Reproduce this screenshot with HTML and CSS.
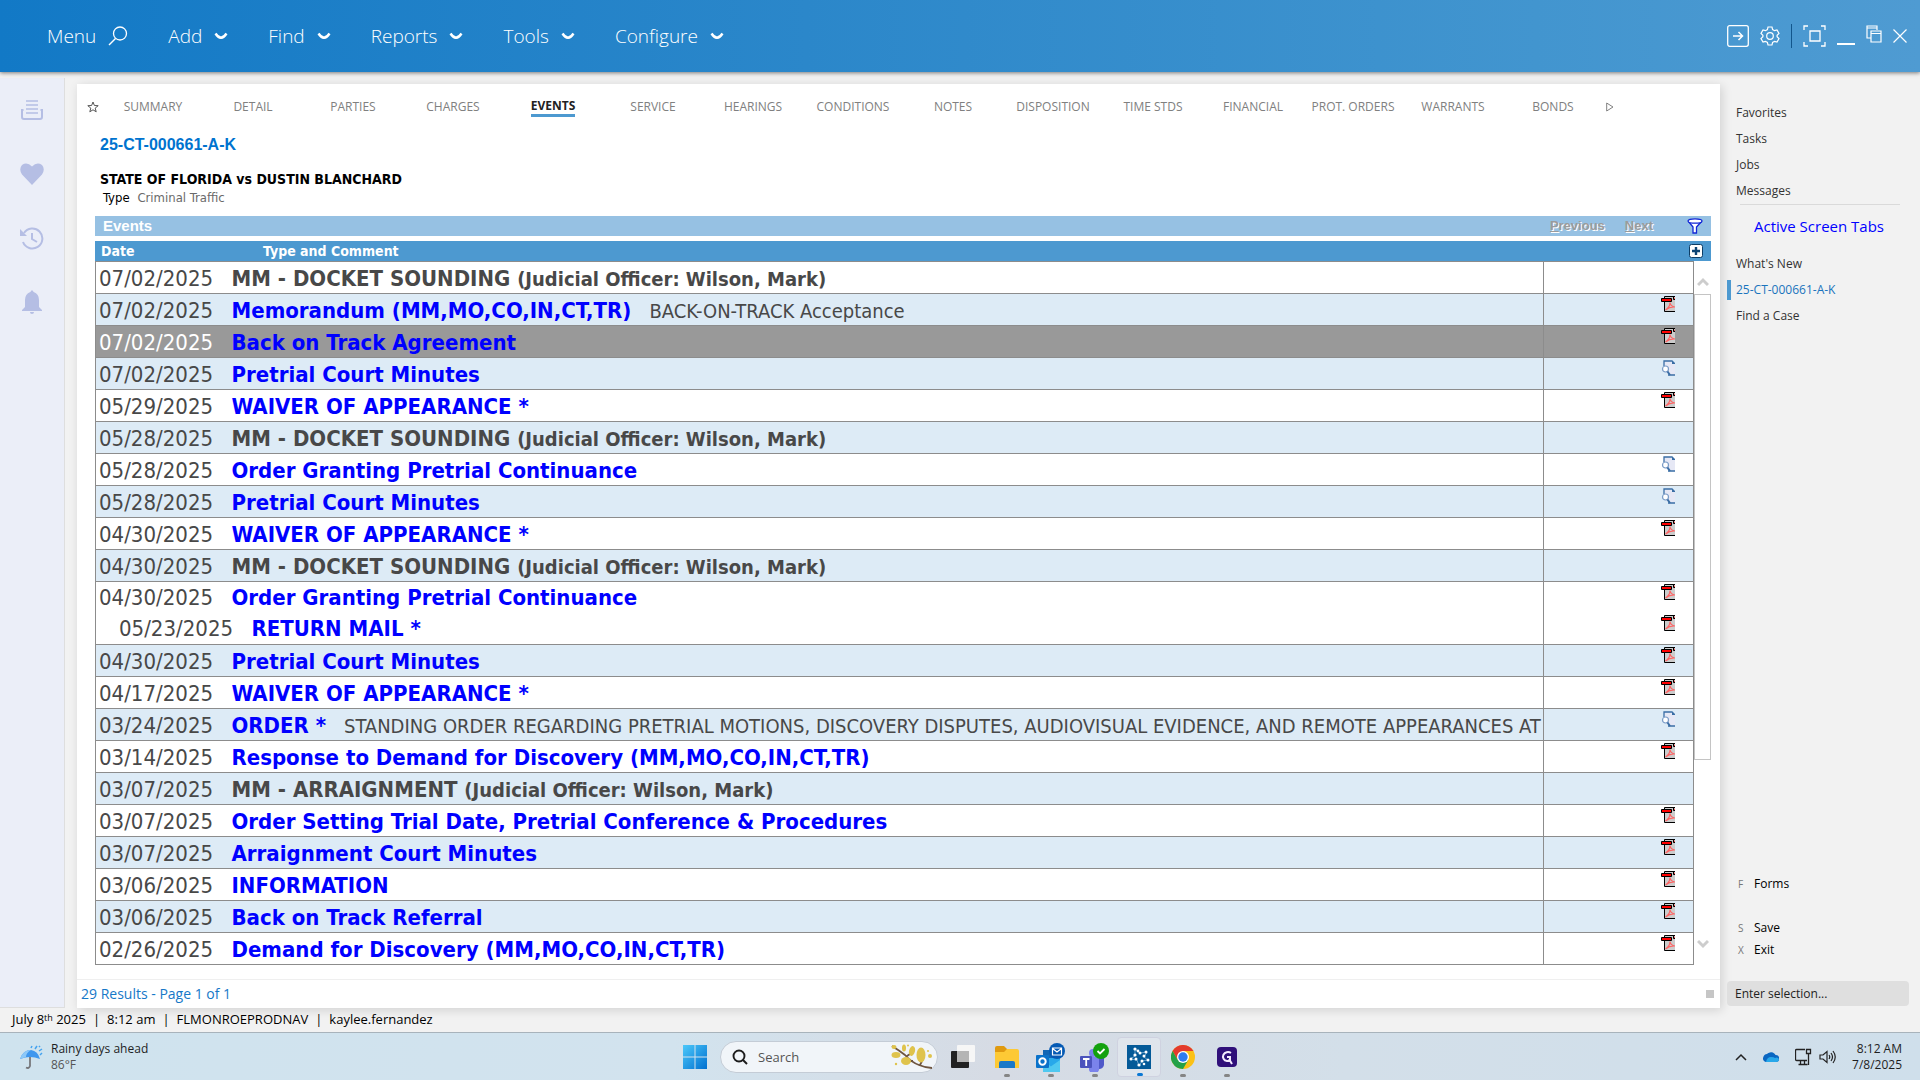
FILE: index.html
```html
<!DOCTYPE html>
<html lang="en">
<head>
<meta charset="utf-8">
<title>25-CT-000661-A-K - Events</title>
<link rel="stylesheet" href="styles.css">
</head>
<body>
<svg class="defs" aria-hidden="true">
  <symbol id="chev" viewBox="0 0 14 10"><path d="M1.500 2.500Q4 6.500 7 6.800Q10 6.500 12.500 2.500" fill="none" stroke="currentColor" stroke-width="2.400"/></symbol>
  <symbol id="pdf" viewBox="0 0 14 16"><path d="M3.500 6V15.500H14V1H3.500z" fill="#ccc"/><path d="M3.500 6V15.500H14M3.500 2V.5H14" fill="none" stroke="#000"/><path d="M12.500 0v3.500H14" fill="#f00" stroke="#000"/><path d="M.5 2.500h10v3H.5z" fill="#f00" stroke="#000"/><path d="M4.500 14Q9 11 9 6.500Q9.500 10.500 14 11Q9 10.500 4.500 14" fill="none" stroke="#ff6464" stroke-width="1.200"/></symbol>
  <symbol id="doc" viewBox="0 0 14 16"><path d="M3 1h8l3 3v11H8l-5-4z" fill="#e6e8f5"/><path d="M3 6V1h8M7 15h7" fill="none" stroke="#3a6ea5" stroke-width="1.300"/><path d="M11 0v4h3V3z" fill="#3a6ea5"/><circle cx="4.500" cy="9" r="3" fill="#fff" stroke="#7b9cc7" stroke-width="1.200"/><path d="M6.500 11.500L9 15" stroke="#3a6ea5" stroke-width="2"/></symbol>
</svg>

<header class="topbar">
  <nav class="menu">
    <button>Menu <svg width="20" height="20" viewBox="0 0 20 20"><circle cx="12" cy="7.500" r="6.500" fill="none" stroke="currentColor" stroke-width="1.300"/><path d="M7.500 12.500L1 19" stroke="currentColor" stroke-width="1.500"/></svg></button>
    <button>Add <svg width="14" height="10"><use href="#chev"/></svg></button>
    <button>Find <svg width="14" height="10"><use href="#chev"/></svg></button>
    <button>Reports <svg width="14" height="10"><use href="#chev"/></svg></button>
    <button>Tools <svg width="14" height="10"><use href="#chev"/></svg></button>
    <button>Configure <svg width="14" height="10"><use href="#chev"/></svg></button>
  </nav>
  <div class="window-tools">
    <button aria-label="Go"><svg width="22" height="22" viewBox="0 0 22 22" fill="none" stroke="currentColor"><rect x=".7" y=".7" width="20.600" height="20.600" rx="2" stroke-width="1.300"/><path d="M6 11h9M11.500 7l4 4-4 4" stroke-width="1.500"/></svg></button>
    <button aria-label="Settings"><svg width="20" height="20" viewBox="0 0 20 20" fill="none" stroke="currentColor" stroke-width="1.200"><path d="M8 1h4l.6 2.600 1.900 1.100L17 4l2 3.400-1.900 1.800v1.600L19 12.600 17 16l-2.500-.7-1.900 1.100L12 19H8l-.6-2.600-1.900-1.100L3 16l-2-3.400 1.900-1.800V9.200L1 7.400 3 4l2.500.7 1.900-1.100z"/><circle cx="10" cy="10" r="3.300"/></svg></button>
    <span class="divider"></span>
    <button aria-label="Full screen"><svg width="23" height="22" viewBox="0 0 23 22" fill="none" stroke="currentColor" stroke-width="1.300"><path d="M1 5V1h4M18 1h4v4M22 17v4h-4M5 21H1v-4M7 6h10v10H7z"/></svg></button>
    <button aria-label="Minimize"><svg width="18" height="22"><path d="M0 19h18" stroke="currentColor" stroke-width="2"/></svg></button>
    <button aria-label="Restore"><svg width="16" height="22" viewBox="0 0 16 22" fill="none" stroke="currentColor" stroke-width="1.200"><path d="M5 13H1V1h10v4M1 3h10M5 6h10v11H5zM5 8.500h10"/></svg></button>
    <button aria-label="Close"><svg width="14" height="14"><path d="M.5.5l13 13M13.500.5l-13 13" stroke="currentColor" stroke-width="1.200"/></svg></button>
  </div>
</header>

<div class="workspace">
  <nav class="rail">
    <button aria-label="Inbox"><svg width="24" height="24" viewBox="0 0 24 24" fill="none" stroke="currentColor" stroke-width="2"><path d="M6 3h12M6 7h12M6 11h12M6 15h12" stroke-width="1.700"/><path d="M3.500 12H2v7q0 2 2 2h16q2 0 2-2v-7h-1.500"/></svg></button>
    <button aria-label="Favorites"><svg width="24" height="24" viewBox="0 0 24 24"><path d="M12 23L2 12.500Q-1.500 7 2 3Q7-.5 12 4.500Q17-.5 22 3Q25.500 7 22 12.500z" fill="currentColor"/></svg></button>
    <button aria-label="History"><svg width="24" height="24" viewBox="0 0 24 24" fill="none" stroke="currentColor" stroke-width="2"><path d="M4 7a10 10 0 1 1-1 9"/><path d="M12 7v6l5 3"/><path d="M0 3v7h7z" fill="currentColor" stroke="none"/></svg></button>
    <button aria-label="Alerts"><svg width="24" height="24" viewBox="0 0 24 24" fill="currentColor"><path d="M12 0l1.700 2Q19 4 19 10v7l3 3v1H2v-1l3-3v-7Q5 4 10.300 2zM10 22h4q0 2-2 2t-2-2"/></svg></button>
  </nav>

  <main class="card">
    <nav class="tabs">
      <button class="star" aria-label="Favorite"><svg width="12" height="12" viewBox="0 0 12 12"><path d="M6 1l1.400 3.500 3.800.2-3 2.400 1 3.700L6 8.800l-3.200 2 1-3.700-3-2.400 3.800-.2z" fill="none" stroke="currentColor"/></svg></button>
      <a href="#">SUMMARY</a><a href="#">DETAIL</a><a href="#">PARTIES</a><a href="#">CHARGES</a><a href="#" class="on"><span>EVENTS</span></a><a href="#">SERVICE</a><a href="#">HEARINGS</a><a href="#">CONDITIONS</a><a href="#">NOTES</a><a href="#">DISPOSITION</a><a href="#">TIME STDS</a><a href="#">FINANCIAL</a><a href="#">PROT. ORDERS</a><a href="#">WARRANTS</a><a href="#">BONDS</a>
      <button class="more" aria-label="More tabs"><svg width="8" height="10"><path d="M.7 1v8L7 5z" fill="none" stroke="currentColor"/></svg></button>
    </nav>
    <section class="case">
      <h1>25-CT-000661-A-K</h1>
      <h2>STATE OF FLORIDA vs DUSTIN BLANCHARD</h2>
      <p>Type <span>Criminal Traffic</span></p>
    </section>
    <section class="events">
      <div class="bar">
        <h3>Events</h3>
        <button class="pager" disabled><u>P</u>revious</button>
        <button class="pager" disabled><u>N</u>ext</button>
        <button class="filter" aria-label="Filter"><svg width="16" height="16" viewBox="0 0 16 16"><path d="M1.500 3.500L6 9v6h3.500V9L14.500 3.500" fill="#fff" stroke="#1126d6" stroke-width="1.300"/><ellipse cx="8" cy="3" rx="7" ry="2.200" fill="#fff" stroke="#1126d6" stroke-width="1.300"/></svg></button>
      </div>
      <table class="head">
        <tr><th class="date" scope="col">Date</th><th class="type" scope="col">Type and Comment</th><th class="add"><button aria-label="Add event"><svg width="14" height="14"><rect x=".5" y=".5" width="13" height="13" rx="2" fill="#fff" stroke="#0d3d66"/><path d="M7 3v8M3 7h8" stroke="#0d4474" stroke-width="2.400"/></svg></button></th></tr>
      </table>
      <div class="grid">
        <table class="rows">
          <colgroup><col class="c-date"><col><col class="c-doc"></colgroup>
          <tbody>
          <tr><td>07/02/2025</td><td><b>MM - DOCKET SOUNDING <small>(Judicial Officer: Wilson, Mark)</small></b></td><td></td></tr>
          <tr><td>07/02/2025</td><td><a href="#">Memorandum (MM,MO,CO,IN,CT,TR)</a><span class="note">BACK-ON-TRACK Acceptance</span></td><td><svg class="ico"><use href="#pdf"/></svg></td></tr>
          <tr class="sel"><td>07/02/2025</td><td><a href="#">Back on Track Agreement</a></td><td><svg class="ico"><use href="#pdf"/></svg></td></tr>
          <tr><td>07/02/2025</td><td><a href="#">Pretrial Court Minutes</a></td><td><svg class="ico"><use href="#doc"/></svg></td></tr>
          <tr><td>05/29/2025</td><td><a href="#">WAIVER OF APPEARANCE *</a></td><td><svg class="ico"><use href="#pdf"/></svg></td></tr>
          <tr><td>05/28/2025</td><td><b>MM - DOCKET SOUNDING <small>(Judicial Officer: Wilson, Mark)</small></b></td><td></td></tr>
          <tr><td>05/28/2025</td><td><a href="#">Order Granting Pretrial Continuance</a></td><td><svg class="ico"><use href="#doc"/></svg></td></tr>
          <tr><td>05/28/2025</td><td><a href="#">Pretrial Court Minutes</a></td><td><svg class="ico"><use href="#doc"/></svg></td></tr>
          <tr><td>04/30/2025</td><td><a href="#">WAIVER OF APPEARANCE *</a></td><td><svg class="ico"><use href="#pdf"/></svg></td></tr>
          <tr><td>04/30/2025</td><td><b>MM - DOCKET SOUNDING <small>(Judicial Officer: Wilson, Mark)</small></b></td><td></td></tr>
          <tr class="parent"><td>04/30/2025</td><td><a href="#">Order Granting Pretrial Continuance</a></td><td><svg class="ico"><use href="#pdf"/></svg></td></tr>
          <tr class="child"><td>05/23/2025</td><td><a href="#">RETURN MAIL *</a></td><td><svg class="ico"><use href="#pdf"/></svg></td></tr>
          <tr class="alt"><td>04/30/2025</td><td><a href="#">Pretrial Court Minutes</a></td><td><svg class="ico"><use href="#pdf"/></svg></td></tr>
          <tr class="plain"><td>04/17/2025</td><td><a href="#">WAIVER OF APPEARANCE *</a></td><td><svg class="ico"><use href="#pdf"/></svg></td></tr>
          <tr class="alt"><td>03/24/2025</td><td><a href="#">ORDER *</a><span class="note">STANDING ORDER REGARDING PRETRIAL MOTIONS, DISCOVERY DISPUTES, AUDIOVISUAL EVIDENCE, AND REMOTE APPEARANCES AT</span></td><td><svg class="ico"><use href="#doc"/></svg></td></tr>
          <tr class="plain"><td>03/14/2025</td><td><a href="#">Response to Demand for Discovery (MM,MO,CO,IN,CT,TR)</a></td><td><svg class="ico"><use href="#pdf"/></svg></td></tr>
          <tr class="alt"><td>03/07/2025</td><td><b>MM - ARRAIGNMENT <small>(Judicial Officer: Wilson, Mark)</small></b></td><td></td></tr>
          <tr class="plain"><td>03/07/2025</td><td><a href="#">Order Setting Trial Date, Pretrial Conference &amp; Procedures</a></td><td><svg class="ico"><use href="#pdf"/></svg></td></tr>
          <tr class="alt"><td>03/07/2025</td><td><a href="#">Arraignment Court Minutes</a></td><td><svg class="ico"><use href="#pdf"/></svg></td></tr>
          <tr class="plain"><td>03/06/2025</td><td><a href="#">INFORMATION</a></td><td><svg class="ico"><use href="#pdf"/></svg></td></tr>
          <tr class="alt"><td>03/06/2025</td><td><a href="#">Back on Track Referral</a></td><td><svg class="ico"><use href="#pdf"/></svg></td></tr>
          <tr class="plain"><td>02/26/2025</td><td><a href="#">Demand for Discovery (MM,MO,CO,IN,CT,TR)</a></td><td><svg class="ico"><use href="#pdf"/></svg></td></tr>
          </tbody>
        </table>
        <div class="scroll">
          <svg width="12" height="10"><path d="M1 8l5-5 5 5" fill="none" stroke="#cdcdcd" stroke-width="3"/></svg>
          <div class="track"><div class="thumb"></div></div>
          <svg width="12" height="10"><path d="M1 2l5 5 5-5" fill="none" stroke="#cdcdcd" stroke-width="3"/></svg>
        </div>
      </div>
    </section>
    <footer class="results"><span>29 Results - Page 1 of 1</span><i></i></footer>
  </main>

  <aside class="side">
    <ul class="links"><li><a href="#">Favorites</a></li><li><a href="#">Tasks</a></li><li><a href="#">Jobs</a></li><li><a href="#">Messages</a></li></ul>
    <h4>Active Screen Tabs</h4>
    <ul class="links open"><li><a href="#">What's New</a></li><li class="now"><a href="#">25-CT-000661-A-K</a></li><li><a href="#">Find a Case</a></li></ul>
    <div class="keys">
      <button class="apart"><kbd>F</kbd>Forms</button>
      <button><kbd>S</kbd>Save</button>
      <button><kbd>X</kbd>Exit</button>
    </div>
    <input type="text" aria-label="Enter selection" placeholder="Enter selection...">
  </aside>
</div>

<div class="status"><span>July 8<sup>th</sup> 2025</span><span>|</span><span>8:12 am</span><span>|</span><span>FLMONROEPRODNAV</span><span>|</span><span>kaylee.fernandez</span></div>

<footer class="taskbar">
  <button class="weather">
    <svg width="24" height="24" viewBox="0 0 24 24"><path d="M0 14Q3 5 11 5Q18 6 20 14Q10 10 0 14z" fill="#3f97ee"/><path d="M0 14Q3 5 11 5Q6 8 6 12z" fill="#8cc8f8"/><path d="M10 12v9q-1 3-4 1.500" fill="none" stroke="#77787c" stroke-width="1.800"/><path d="M11 3l1-2M15 4l2-3M19 2l1-1M19 6l3-2M20 10l2-2" stroke="#45a3ef" stroke-width="1.500"/></svg>
    <span>Rainy days ahead<br><em>86°F</em></span>
  </button>
  <div class="apps">
    <button class="app" aria-label="Start"><svg width="24" height="24"><defs><linearGradient id="win" x2="1" y2="1"><stop stop-color="#4cc8fa"/><stop offset="1" stop-color="#0070d0"/></linearGradient></defs><path d="M0 0h11.500v11.500H0zM12.500 0H24v11.500H12.500zM0 12.500h11.500V24H0zM12.500 12.500H24V24H12.500z" fill="url(#win)"/></svg></button>
    <label class="search">
      <svg width="16" height="16" viewBox="0 0 16 16" fill="none" stroke="#1c1c1c" stroke-width="1.900"><circle cx="7" cy="7" r="5.500"/><path d="M11 11l4 4"/></svg>
      <input type="text" placeholder="Search" aria-label="Search">
      <svg width="42" height="26" viewBox="0 0 42 26"><path d="M1 2Q9 7 14 11Q20 18 28 21Q35 24 41 24M16 12l6-4M22 17l-7 0M29 21l2-4" fill="none" stroke="#6e5540" stroke-width="1.800"/><g fill="#dfc34c"><ellipse cx="21" cy="7" rx="3" ry="5" transform="rotate(15 21 7)"/><ellipse cx="30" cy="11" rx="4.500" ry="7.500"/><ellipse cx="15" cy="17" rx="5" ry="4"/><ellipse cx="5" cy="11" rx="4.500" ry="3"/><ellipse cx="13" cy="4" rx="2" ry="3.500"/><ellipse cx="3" cy="3" rx="2.500" ry="2"/><circle cx="39" cy="12" r="2"/><circle cx="5" cy="20" r="1.200"/><circle cx="37" cy="7" r="1"/><circle cx="17" cy="1.500" r="1"/></g></svg>
    </label>
    <button class="app" aria-label="Task view"><svg width="24" height="24"><rect y="6" width="18" height="17" rx="1" fill="#222"/><rect x="6" width="18" height="17" rx="1" fill="#f6f6f6"/><rect x="6" y="6" width="12" height="11" fill="#b5b5b5"/></svg></button>
    <button class="app run" aria-label="File Explorer"><svg width="24" height="24"><path d="M0 3q0-2 2-2h7l3 3v6H0z" fill="#e09a10"/><path d="M0 7h9l3-3h10q2 0 2 2v17H0z" fill="#fdc935"/><path d="M4 23v-5q0-2 2-2h12q2 0 2 2v5z" fill="#1978c8"/></svg></button>
    <button class="app run" aria-label="Outlook"><svg width="30" height="30" viewBox="0 0 30 30"><path d="M7 8h17v22H7z" fill="#28a8ea"/><path d="M7 8h17v8H7z" fill="#1066b5"/><path d="M7 18l8.500 7L7 30zM24 18v12H7z" fill="#50c8f0"/><rect y="13" width="13" height="13" rx="1" fill="#0a72ca"/><circle cx="6.500" cy="19.500" r="3.200" fill="none" stroke="#fff" stroke-width="2"/><circle cx="21" cy="9" r="8" fill="#0459b4"/><path d="M16.500 6h9v7h-9zM16.500 6.500l4.500 3.500 4.500-3.500" fill="none" stroke="#fff" stroke-width="1.200"/></svg></button>
    <button class="app run" aria-label="Teams"><svg width="30" height="30" viewBox="0 0 30 30"><circle cx="13" cy="11" r="4" fill="#7b83eb"/><path d="M9 15h10v8a5 6 0 0 1-10 5z" fill="#7b83eb"/><path d="M19 16h5v7q-1 4-5 4z" fill="#5059c9"/><rect y="14" width="12" height="12" rx="1" fill="#4b53bc"/><path d="M3 17h6.500M6.200 17v7" stroke="#fff" stroke-width="1.800"/><circle cx="21" cy="9" r="8" fill="#13a10e"/><path d="M17.500 9l2.500 2.500L24.500 7" fill="none" stroke="#fff" stroke-width="1.800"/></svg></button>
    <button class="app run active" aria-label="Navigator"><svg width="24" height="24"><path d="M0 0h24v24H0z" fill="#045a98"/><path d="M8 4l5 4 7-1-3 5 4 3-6 1-3 5-2-6-7-1 5-3z" fill="none" stroke="#7db3d8" stroke-width=".8"/><g fill="#fff"><circle cx="8" cy="4" r="1.600"/><circle cx="11" cy="6" r="1.400"/><circle cx="13" cy="8" r="1.500"/><circle cx="19" cy="7" r="1.500"/><circle cx="17" cy="11" r="1.500"/><circle cx="21" cy="15" r="1.500"/><circle cx="15" cy="16" r="1.500"/><circle cx="12" cy="20" r="1.600"/><circle cx="9" cy="14" r="1.500"/><circle cx="4" cy="14" r="1.500"/><circle cx="8" cy="10" r="1.600"/><circle cx="17" cy="19" r="1.300"/></g></svg></button>
    <button class="app run" aria-label="Chrome"><svg width="24" height="24" viewBox="-12 -12 24 24"><circle r="12" fill="#fbc116"/><path d="M-10.400-6A12 12 0 0 1 10.400-6H0L-5.200 3z" fill="#e33b2e"/><path d="M-10.400-6A12 12 0 0 0 0 12L5.200 3-5.200 3z" fill="#24a148"/><circle r="6" fill="#fff"/><circle r="4.700" fill="#2e7cf0"/></svg></button>
    <button class="app run" aria-label="Search tool"><svg width="20" height="20"><rect width="20" height="20" rx="4" fill="#30107a"/><path d="M14 6a5 4.500 0 1 0-4 8h3v-4h-3M12 12l3 5" fill="none" stroke="#f4ecff" stroke-width="2"/></svg></button>
  </div>
  <div class="tray">
    <button aria-label="Hidden icons"><svg width="12" height="8"><path d="M1 7l5-5 5 5" fill="none" stroke="#222" stroke-width="1.500"/></svg></button>
    <button aria-label="OneDrive"><svg width="16" height="11"><path d="M4 3a5 4.500 0 0 1 8.500 1A3.500 3.500 0 0 1 13 11H3.500A3.500 3.500 0 0 1 0 7q1-4 4-4z" fill="#0a67c2"/><path d="M3 11q1-5 5-5 3 0 4 1a3 3 0 0 1 4 1q0 3-3 3z" fill="#28a8ea"/></svg></button>
    <button aria-label="Network and volume"><svg width="17" height="18" viewBox="0 0 17 18" fill="none" stroke="#222" stroke-width="1.300"><path d="M10 1.500H1.500q-1 0-1 1v9q0 1 1 1H12M3.500 16.500h9M5.500 13v3M9.500 13v3M11.500 1.500h4v4h-4zM13.500 6v11"/></svg><svg width="17" height="16" viewBox="0 0 17 16" fill="none" stroke="#222" stroke-width="1.200"><path d="M1 6h3l4-3.500v11L4 10H1zM10 6q1.500 2 0 4M12 4q3 4 0 8M14 2q4.500 6 0 12"/></svg></button>
    <button class="clock">8:12 AM<br>7/8/2025</button>
  </div>
</footer>
</body>
</html>
```
FILE: styles.css
```css
* { box-sizing: border-box; }
body {
  margin: 0; min-height: 100vh; display: flex; flex-direction: column;
  background: #f2f2f2; color: #1e1e1e;
  font: 12px/16px "Open Sans", "Noto Sans", sans-serif;
}
button, input { font: inherit; color: inherit; border: 0; padding: 0; margin: 0; background: none; }
button { display: flex; align-items: center; }
a { color: inherit; text-decoration: none; }
h1, h2, h3, h4, p, ul { margin: 0; padding: 0; }
svg { display: block; flex: none; }
.defs { position: absolute; width: 0; height: 0; }

.topbar {
  height: 72px; flex: none; display: flex; align-items: center; justify-content: space-between;
  padding: 0 13px 0 47px; color: #fff;
  background: linear-gradient(90deg, #1279c6, #2b87ca 42%, #4295cf 80%, #4f9bd2);
  box-shadow: 0 1px 4px rgba(0, 0, 0, .5); z-index: 1;
}
.menu { display: flex; gap: 40px; }
.menu button { gap: 12px; font-size: 19px; line-height: 28px; font-weight: 300; }
.window-tools { display: flex; align-items: center; gap: 11px; }
.divider { width: 1px; height: 24px; background: #12568c; }

.workspace { flex: 1; display: flex; }
.rail {
  width: 65px; flex: none; margin-top: 6px; padding-top: 20px;
  display: flex; flex-direction: column; align-items: center; gap: 40px;
  background: #ebeef8; border: solid #dedede; border-width: 0 1px 1px 0; color: #b5bee4;
}
.card {
  flex: 1; min-width: 0; margin: 12px 0 0 12px; display: flex; flex-direction: column;
  background: #fff; box-shadow: 2px 2px 10px rgba(0, 0, 0, .14);
}
.tabs { display: flex; align-items: center; height: 46px; color: #808080; padding-left: 10px; }
.tabs a { flex: 0 1 100px; text-align: center; white-space: nowrap; font-size: 12px; }
.tabs .star { width: 16px; flex: none; color: #555; }
.tabs .more { padding-left: 3px; }
.on span { display: inline-block; font-weight: 700; color: #222; border-bottom: 3px solid #4d99d0; line-height: 17px; }
.case { padding: 6px 0 0 23px; height: 86px; font-family: "DejaVu Sans Condensed", "DejaVu Sans", sans-serif; }
.case h1 { font: bold 16px/18px "Liberation Sans", sans-serif; color: #0073cf; }
.case h2 { font-size: 14px; line-height: 18px; margin-top: 16px; color: #000; }
.case p { padding-left: 3px; line-height: 20px; font-size: 13px; color: #000; }
.case p span { color: #6a6a6a; margin-left: 4px; }

.events { padding: 0 9px 14px 18px; }
.bar { height: 20px; display: flex; align-items: center; padding: 0 8px; background: #96c1e3; font-family: "Liberation Sans", sans-serif; }
.bar h3 { flex: 1; font-size: 15px; color: #fff; }
.pager { font-size: 13px; font-weight: 700; color: #9b9b9b; text-shadow: 1px 1px #fff; margin-right: 20px; }
.filter { margin-left: 14px; }
.head { width: 100%; height: 20px; margin-top: 5px; border-spacing: 0; background: #4d99d0; color: #fff; font: bold 14px/20px "DejaVu Sans Condensed", "DejaVu Sans", sans-serif; }
.head th { padding: 0; text-align: left; }
.head .date { width: 168px; padding-left: 6px; }
.head .add { width: 22px; }

.grid { display: flex; }
.rows {
  flex: 1; min-width: 0; width: 100%; table-layout: fixed; border-collapse: collapse; border: 1px solid #8c8c8c;
  font: 22px/26px "DejaVu Sans Condensed", "DejaVu Sans", sans-serif; color: #484848;
}
.c-date { width: 133px; }
.c-doc { width: 150px; }
.rows tr { height: 32px; border-bottom: 1px solid #8c8c8c; }
.rows tr:nth-child(even) { background: #ddebf6; }
.rows tr.sel { background: #999; }
.rows tr.sel td:first-child { color: #fff; }
.rows tr.alt { background: #ddebf6; }
.rows tr.plain, .rows tr.child { background: #fff; }
.rows tr.parent { border-bottom: 0; height: 31px; }
.rows td { padding: 2px 0 0 3px; white-space: nowrap; overflow: hidden; }
.rows td:last-child { border-left: 1px solid #8c8c8c; vertical-align: top; padding: 2px 18px 0 0; }
.rows .child td:not(:last-child) { padding-left: 23px; }
.rows td:first-child { overflow: visible; }
.rows a { color: #00f; font-weight: 700; }
.rows small { font-size: 20px; }
.note { font-size: 20px; margin-left: 18px; }
.ico { width: 14px; height: 16px; margin-left: auto; }
.scroll { width: 17px; flex: none; display: flex; flex-direction: column; align-items: center; padding: 16px 0; }
.track { flex: 1; align-self: stretch; margin: 7px 0; }
.thumb { height: 73%; border: 1px solid #c4c4c4; background: #fff; }
.results {
  margin-top: auto; height: 29px; display: flex; align-items: center; justify-content: space-between;
  padding: 0 6px 0 4px; border-top: 1px solid #efefef; color: #1678c8; font-size: 14px;
}
.results i { width: 8px; height: 8px; background: #c6c6c6; }

.side { width: 200px; flex: none; padding: 28px 11px 2px 7px; display: flex; flex-direction: column; color: #333; }
.links { list-style: none; }
.links li { padding-left: 9px; line-height: 26px; }
.side h4 { margin: 0 9px 0 13px; padding: 8px 0 0 14px; border-top: 1px solid #dadada; font-size: 15px; line-height: 26px; font-weight: 400; color: #00f; white-space: nowrap; }
.links.open { margin-top: 12px; }
.links .now { color: #1a74bd; line-height: 20px; margin: 3px 0; padding-left: 5px; border-left: 4px solid #4d99d0; }
.keys { margin-top: auto; padding-bottom: 20px; color: #000; }
.keys button { height: 22px; padding-left: 11px; }
.keys .apart { margin-bottom: 22px; }
.keys kbd { width: 16px; font: 10px "Open Sans", sans-serif; color: #777; text-align: left; }
.side input { height: 25px; padding: 0 8px; border-radius: 4px; background: #dfdfdf; font-size: 12px; }
.side input::placeholder { color: #222; opacity: 1; }

.status { height: 24px; flex: none; display: flex; align-items: center; gap: 7px; padding: 0 12px 2px; font-size: 13px; color: #000; }
.status sup { font-size: 9px; line-height: 0; vertical-align: 3px; }

.taskbar {
  height: 48px; flex: none; display: grid; grid-template-columns: 1fr auto 1fr; align-items: center;
  border-top: 1px solid #a8b3bb; padding: 0 18px 0 20px;
  background: linear-gradient(90deg, #cfe3ee, #d2e3ee 35%, #d6dbe4 52%, #d3dfe9 70%, #cfdfeb);
}
.weather { gap: 7px; text-align: left; font-size: 12px; }
.weather em { font-style: normal; color: #555; }
.apps { display: flex; align-items: center; }
.app { width: 44px; height: 40px; justify-content: center; position: relative; }
.app.run::after { content: ""; position: absolute; bottom: 0; left: 19px; width: 6px; height: 3px; border-radius: 2px; background: #858585; }
.app.active { background: rgba(255, 255, 255, .25); border: 1px solid #cfd2e0; border-radius: 4px; }
.app.active::after { background: #0a78d4; }
.search {
  width: 218px; height: 32px; margin: 0 3px; display: flex; align-items: center; gap: 10px; padding: 0 4px 0 11px;
  border-radius: 16px; background: #f1f5f9; border: 1px solid #c4ccd6;
}
.search input { flex: 1; min-width: 0; font-size: 13px; }
.search input::placeholder { color: #555; opacity: 1; }
.tray { justify-self: end; display: flex; align-items: center; gap: 16px; }
.tray button { gap: 7px; }
.clock { text-align: right; }
```
